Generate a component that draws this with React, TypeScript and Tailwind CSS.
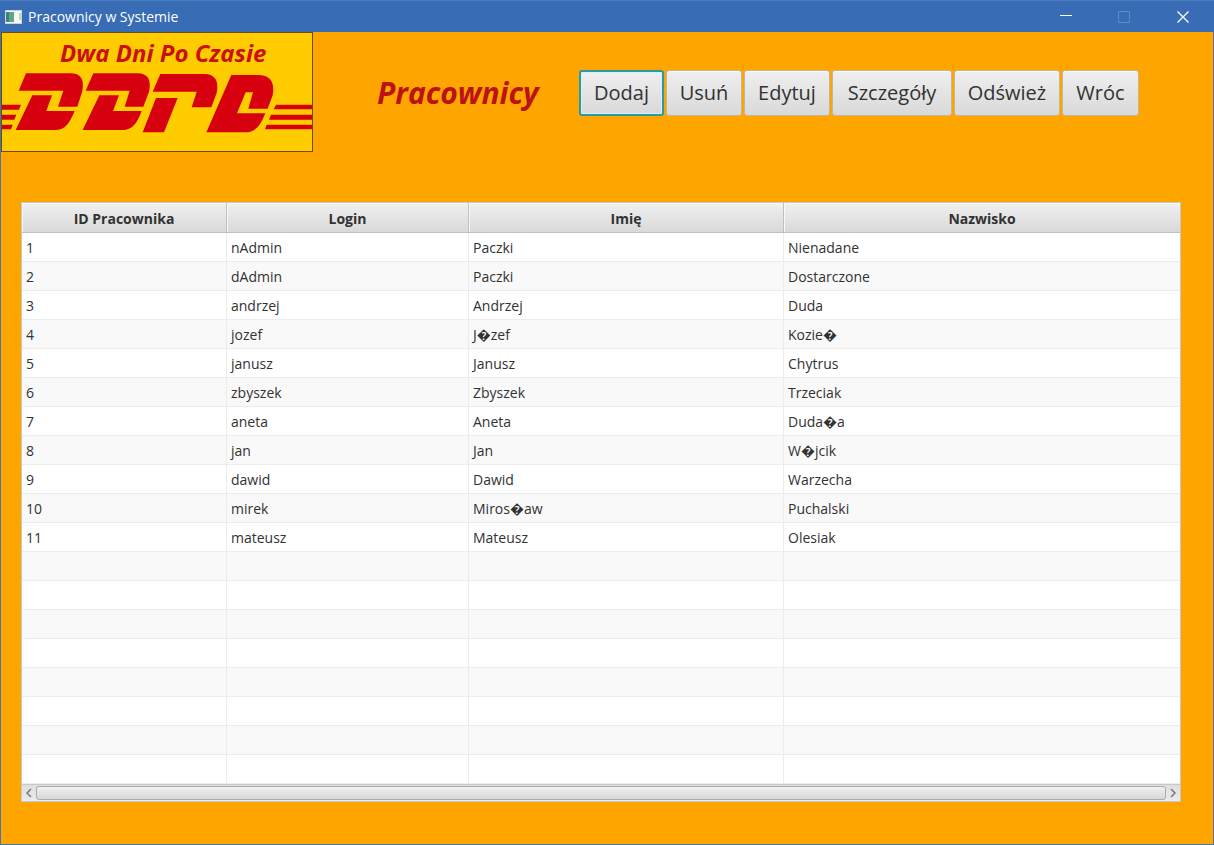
type Employee = { id: number; login: string; firstName: string; lastName: string };

const employees: Employee[] = [
  { id: 1, login: "nAdmin", firstName: "Paczki", lastName: "Nienadane" },
  { id: 2, login: "dAdmin", firstName: "Paczki", lastName: "Dostarczone" },
  { id: 3, login: "andrzej", firstName: "Andrzej", lastName: "Duda" },
  { id: 4, login: "jozef", firstName: "J\uFFFDzef", lastName: "Kozie\uFFFD" },
  { id: 5, login: "janusz", firstName: "Janusz", lastName: "Chytrus" },
  { id: 6, login: "zbyszek", firstName: "Zbyszek", lastName: "Trzeciak" },
  { id: 7, login: "aneta", firstName: "Aneta", lastName: "Duda\uFFFDa" },
  { id: 8, login: "jan", firstName: "Jan", lastName: "W\uFFFDjcik" },
  { id: 9, login: "dawid", firstName: "Dawid", lastName: "Warzecha" },
  { id: 10, login: "mirek", firstName: "Miros\uFFFDaw", lastName: "Puchalski" },
  { id: 11, login: "mateusz", firstName: "Mateusz", lastName: "Olesiak" },
];

const emptyRows = [12, 13, 14, 15, 16, 17, 18, 19];

const columns = ["ID Pracownika", "Login", "Imię", "Nazwisko"];

const actions = [
  { label: "Dodaj", width: "w-[85px]" },
  { label: "Usuń", width: "w-[76px]" },
  { label: "Edytuj", width: "w-[86px]" },
  { label: "Szczegóły", width: "w-[120px]" },
  { label: "Odśwież", width: "w-[106px]" },
  { label: "Wróc", width: "w-[77px]" },
];

function TitleBar() {
  return (
    <header className="flex h-8 items-center border-t border-[#4a7cc0] bg-[#386cb5] pr-px pl-1 text-white">
      <svg className="h-4 w-5 shrink-0" viewBox="0 0 20 16" aria-hidden="true">
        <rect x="1" y="1" width="17" height="14" fill="#c9d3dc" />
        <rect x="2" y="2" width="15" height="12" fill="#f6f8f8" />
        <rect x="2" y="3" width="8" height="10" fill="#5fa588" />
        <rect x="2" y="3" width="3" height="10" fill="#3f8082" />
        <rect x="15" y="4" width="2" height="7" fill="#b9dcc0" />
      </svg>
      <h1 className="ml-1 flex-1 text-sm">Pracownicy w Systemie</h1>
      <button aria-label="Minimalizuj" className="flex h-full w-[59px] items-center justify-center">
        <svg width="12" height="12" viewBox="0 0 12 12"><path d="M0 4.500h12" stroke="#fff" /></svg>
      </button>
      <button aria-label="Maksymalizuj" disabled className="flex h-full w-[58px] items-center justify-center">
        <svg width="12" height="12" viewBox="0 0 12 12"><path d="M.5.5h11v11H.5z" fill="none" stroke="#5c8acb" /></svg>
      </button>
      <button aria-label="Zamknij" className="flex h-full w-[60px] items-center justify-center">
        <svg width="12" height="12" viewBox="0 0 12 12"><path d="M.5.5l11 11M11.500.5l-11 11" stroke="#fff" strokeWidth="1.300" /></svg>
      </button>
    </header>
  );
}

function Logo() {
  return (
    <svg className="h-[120px] w-[312px] shrink-0" viewBox="3 96 936 360" role="img" aria-label="Dwa Dni Po Czasie">
      <rect x="4.500" y="97.500" width="933" height="357" fill="#ffcc00" stroke="#6d4c14" strokeWidth="3" />
      <text
        x="180"
        y="186"
        fill="#cb1010"
        fontSize="72"
        fontWeight="700"
        fontStyle="italic"
        fontFamily="'Open Sans', 'Noto Sans', sans-serif"
      >
        Dwa Dni Po Czasie
      </text>
      <g fill="#d6000f">
        <path d="M78 220H211C242 220 254 238 247 273L232 320H174L190 272H56Z" />
        <path d="M97 286H156L139 333H224C209 369 196 390 165 390H47Z" />
        <path d="M280 220H412C444 220 455 240 447 275L430 320H374L389 272H257Z" />
        <path d="M298 286H357L339 333H425C411 370 398 390 367 390H248Z" />
        <path d="M481 222H613C646 222 657 244 650 279L634 322H575L590 275H458Z" />
        <path d="M468 294H533L492 397H428Z" />
        <path d="M694 225H775C812 225 825 248 818 286L803 326H745L759 277H737L711 340H796C781 375 769 397 734 397H619Z" />
        <path d="M6 314H63L57 329H6ZM6 344H49L43 359H6ZM6 374H38L33 388H6Z" />
        <path d="M828 314H936V328H821ZM813 344H936V359H807ZM800 374H936V388H795Z" />
      </g>
    </svg>
  );
}

function ScrollBar() {
  return (
    <div className="flex h-[17px] items-center border-t border-[#c8c8c8] bg-gradient-to-b from-[#dedede] to-[#ececec]">
      <button aria-label="Przewiń w lewo" className="flex h-full w-3.5 items-center justify-center">
        <svg width="6" height="10" viewBox="0 0 6 10"><path d="M5 1L1 5l4 4" fill="none" stroke="#777" strokeWidth="1.500" /></svg>
      </button>
      <div className="h-3.5 flex-1 rounded-[3px] border border-[#ababab] bg-gradient-to-b from-[#f0f0f0] to-[#d8d8d8]" />
      <button aria-label="Przewiń w prawo" className="flex h-full w-3.5 items-center justify-center">
        <svg width="6" height="10" viewBox="0 0 6 10"><path d="M1 1l4 4-4 4" fill="none" stroke="#777" strokeWidth="1.500" /></svg>
      </button>
    </div>
  );
}

const cell = "border-r border-b border-[#ececec] px-1 pt-0.5 pb-0 last:border-r-0";

export default function App() {
  return (
    <div className="flex min-h-screen flex-col bg-[#ffa500] font-['Open_Sans','Noto_Sans',sans-serif] text-[#323232]">
      <TitleBar />
      <main className="flex-1 border-x border-b border-[#4a76a8]">
        <div className="flex items-center">
          <Logo />
          <h2 className="ml-16 w-[202px] pt-0.5 text-3xl font-bold text-[#bb1313] italic">Pracownicy</h2>
          <div className="flex gap-[2px] pt-[2px]">
            {actions.map(({ label, width }) => (
              <button
                key={label}
                className={`${width} h-[46px] shrink-0 rounded-[3px] border border-[#c4b796] bg-gradient-to-b from-[#efefef] to-[#d9d9d9] text-center text-xl shadow-[inset_0_1px_0_#fafafa] first:border-2 first:border-[#2b9aa8] first:shadow-[inset_0_0_0_1px_#d5f1f6]`}
              >
                {label}
              </button>
            ))}
          </div>
        </div>
        <section className="mt-[50px] mr-8 mb-10 ml-5 border border-[#c8c8c8] bg-white">
          <table className="w-full table-fixed border-separate border-spacing-0 text-sm">
            <colgroup>
              <col className="w-[205px]" />
              <col className="w-[242px]" />
              <col className="w-[315px]" />
              <col />
            </colgroup>
            <thead>
              <tr className="h-[30px]">
                {columns.map((name) => (
                  <th
                    key={name}
                    scope="col"
                    className="border-r border-b border-[#c0c0c0] bg-gradient-to-b from-[#f0f0f0] to-[#d9d9d9] px-0 pt-0.5 pb-0 font-bold shadow-[inset_1px_1px_0_#f8f8f8] last:border-r-0"
                  >
                    {name}
                  </th>
                ))}
              </tr>
            </thead>
            <tbody>
              {employees.map((e) => (
                <tr key={e.id} className="h-[29px] even:bg-[#f9f9f9]">
                  <td className={cell}>{e.id}</td>
                  <td className={cell}>{e.login}</td>
                  <td className={cell}>{e.firstName}</td>
                  <td className={cell}>{e.lastName}</td>
                </tr>
              ))}
              {emptyRows.map((row) => (
                <tr key={row} className="h-[29px] even:bg-[#f9f9f9]">
                  {columns.map((name) => (
                    <td key={name} className={cell} />
                  ))}
                </tr>
              ))}
            </tbody>
          </table>
          <ScrollBar />
        </section>
      </main>
    </div>
  );
}
